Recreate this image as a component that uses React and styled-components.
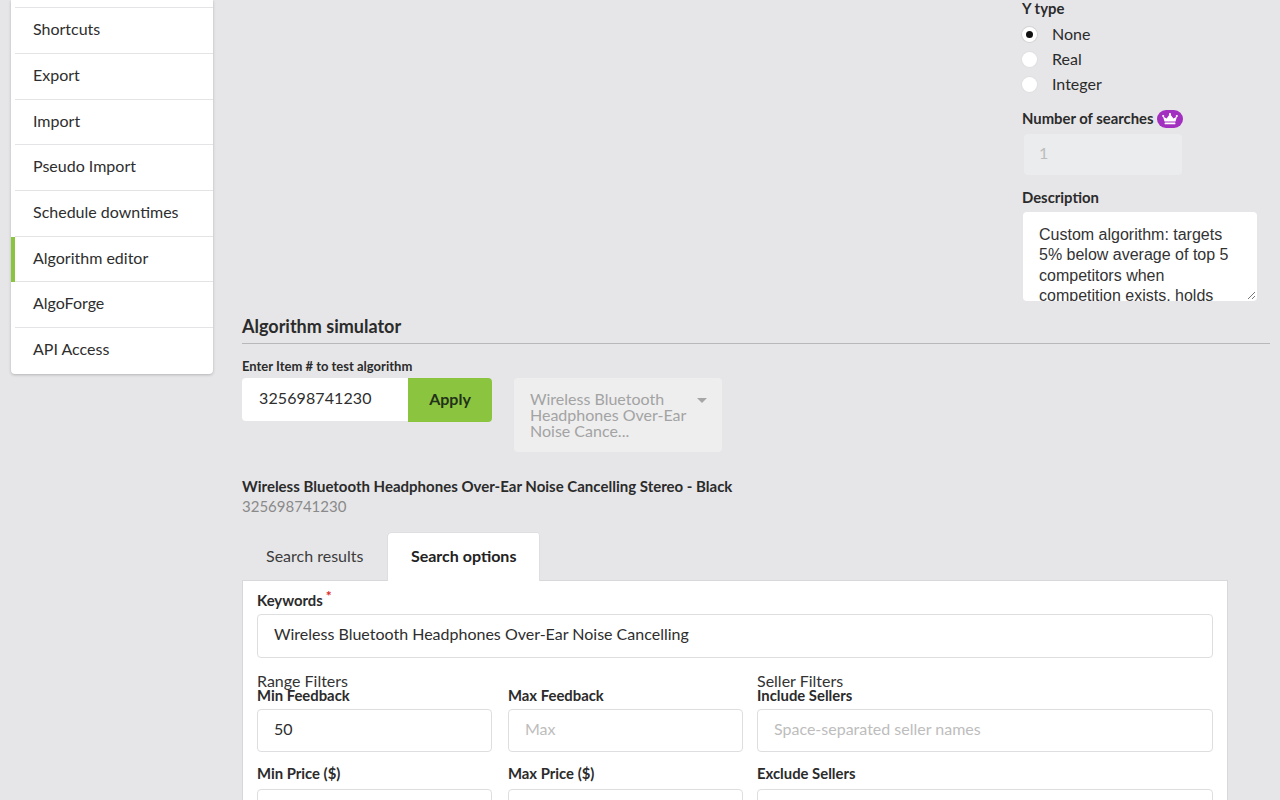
import React from "react";
import styled, { createGlobalStyle } from "styled-components";

const Global = createGlobalStyle`
  html, body { margin: 0; padding: 0; height: 800px; overflow: hidden; background: #e6e6e8; }
  body { font-family: Lato, "Liberation Sans", sans-serif; font-size: 16px; color: #2b2b2b; }
  #root { height: 800px; overflow: hidden; }
  * { box-sizing: border-box; }
`;

const Page = styled.div`
  display: flex;
  align-items: flex-start;
  height: 800px;
  overflow: hidden;
  padding-left: 11px;
`;

const Menu = styled.nav`
  width: 202px;
  flex: none;
  background: #fff;
  border-radius: 0 0 4px 4px;
  box-shadow: 0 1px 3px rgba(0, 0, 0, 0.22);
`;

const MenuStub = styled.div`
  height: 8.3px;
  border-bottom: 1px solid #e4e4e6;
  margin-left: 4px;
`;

const MenuItem = styled.div`
  position: relative;
  height: 45.7px;
  line-height: 42.2px;
  padding-left: 22px;
  font-size: 16px;
  color: #2e2e2e;
  &::after {
    content: "";
    position: absolute;
    left: 4px;
    right: 0;
    bottom: 0;
    height: 1px;
    background: ${(p) => (p.$last ? "transparent" : "#e4e4e6")};
  }
  ${(p) => p.$active && `box-shadow: inset 4px 0 0 #8bc540;`}
`;

const Main = styled.main`
  width: 1028px;
  margin-left: 29px;
  flex: none;
`;

const TopArea = styled.section`
  display: flex;
  justify-content: flex-end;
  height: 316px;
`;

const SideForm = styled.div`
  width: 248px;
`;

const FieldLabel = styled.div`
  font-size: 14.85px;
  font-weight: 700;
  line-height: 16px;
  padding-bottom: 2px;
  color: #2b2b2b;
`;

const RadioList = styled.div`
  margin-top: 4px;
  display: flex;
  flex-direction: column;
`;

const RadioRow = styled.div`
  display: flex;
  align-items: center;
  height: 25px;
  font-size: 16px;
`;

const RadioText = styled.span`
  line-height: 20px;
  margin-top: -2px;
`;

const RadioDot = styled.span`
  width: 15px;
  height: 15px;
  border-radius: 50%;
  background: #fff;
  margin-right: 15px;
  display: flex;
  align-items: center;
  justify-content: center;
  box-shadow: 0 0 0 1px ${(p) => (p.$on ? "#d4d4d6" : "#e0e0e2")};
  &::after {
    content: "";
    width: 7px;
    height: 7px;
    border-radius: 50%;
    background: ${(p) => (p.$on ? "#111" : "transparent")};
  }
`;

const LabelWithBadge = styled(FieldLabel)`
  display: flex;
  align-items: center;
  gap: 3px;
  height: 18px;
  padding-bottom: 0;
  line-height: 16px;
  margin-top: 13px;
`;

const LabelText = styled.span`
  margin-top: -2px;
`;

const CrownBadge = styled.span`
  width: 26px;
  height: 18px;
  border-radius: 9px;
  background: #a22fbf;
  display: flex;
  align-items: center;
  justify-content: center;
`;

const DisabledInput = styled.div`
  width: 158px;
  height: 41px;
  margin: 6px 0 0 2px;
  background: #eaecee;
  border-radius: 4px;
  padding-left: 15px;
  line-height: 38px;
  font-size: 16px;
  color: #bcbcbc;
`;

const DescLabel = styled(FieldLabel)`
  margin-top: 14px;
`;

const TextArea = styled.div`
  position: relative;
  width: 234px;
  height: 89px;
  margin: 5px 0 0 0.5px;
  background: #fff;
  border-radius: 4px;
  padding: 12.7px 16.5px 0;
  overflow: hidden;
  font-family: "Liberation Sans", Arial, sans-serif;
  font-size: 16px;
  line-height: 20.57px;
  color: #333;
`;

const Grip = styled.svg`
  position: absolute;
  right: 1px;
  bottom: 1px;
`;

const SectionTitle = styled.h2`
  margin: 0;
  height: 28px;
  line-height: 20px;
  font-size: 18px;
  font-weight: 700;
  color: #2b2b2b;
  border-bottom: 1px solid #b8b8ba;
  width: 1028px;
`;

const SmallLabel = styled.div`
  margin-top: 14px;
  font-size: 13px;
  font-weight: 700;
  line-height: 16px;
  color: #2b2b2b;
`;

const ItemRow = styled.div`
  display: flex;
  align-items: flex-start;
  margin-top: 4px;
`;

const ItemInput = styled.div`
  width: 166px;
  height: 43px;
  background: #fff;
  border-radius: 4px 0 0 4px;
  padding-left: 17px;
  line-height: 39px;
  font-size: 16px;
  letter-spacing: 0.1px;
  color: #2e2e2e;
`;

const ApplyButton = styled.button`
  width: 84px;
  height: 44px;
  border: 0;
  padding: 0 0 3px;
  background: #8bc540;
  border-radius: 0 4px 4px 0;
  font-family: inherit;
  font-size: 16px;
  font-weight: 700;
  color: #23321a;
`;

const SelectBox = styled.div`
  position: relative;
  width: 208px;
  height: 74px;
  margin-left: 22px;
  background: #eeeeef;
  border-radius: 4px;
  padding: 13px 30px 0 16px;
  font-size: 16px;
  line-height: 16px;
  color: #a3a3a3;
`;

const Caret = styled.span`
  position: absolute;
  top: 20px;
  right: 15px;
  border-left: 5px solid transparent;
  border-right: 5px solid transparent;
  border-top: 5px solid #a6a6a6;
`;

const ItemTitle = styled.div`
  margin-top: 25px;
  font-size: 15px;
  font-weight: 700;
  line-height: 18px;
  color: #2b2b2b;
`;

const ItemNumber = styled.div`
  margin-top: 1px;
  font-size: 15px;
  line-height: 20px;
  color: #8a8a8a;
`;

const Tabs = styled.div`
  display: flex;
  margin-top: 16px;
  height: 49px;
  position: relative;
  z-index: 1;
`;

const Tab = styled.div`
  padding: 0 24px;
  height: 49px;
  line-height: 47px;
  font-size: 16px;
  font-weight: ${(p) => (p.$active ? 700 : 400)};
  color: ${(p) => (p.$active ? "#222" : "#3c3c3c")};
  background: ${(p) => (p.$active ? "#fff" : "transparent")};
  border-radius: 4px 4px 0 0;
  ${(p) =>
    p.$active &&
    `margin-left: -0.5px; box-shadow: inset 1px 1px 0 #dedee0, inset -1px 0 0 #dedee0;`}
`;

const Panel = styled.section`
  width: 986px;
  height: 240px;
  background: #fff;
  border: 1px solid #d8d8da;
  border-bottom: 0;
  margin-top: -1px;
  padding: 10px 14px 0;
`;

const KeywordLabel = styled.div`
  font-size: 14.85px;
  font-weight: 700;
  line-height: 18px;
  color: #2b2b2b;
`;

const Required = styled.span`
  position: relative;
  top: -5px;
  color: #db2828;
  font-size: 14px;
  line-height: 0;
  margin-left: 3px;
  font-weight: 700;
`;

const Input = styled.div`
  height: ${(p) => p.$h || 43}px;
  margin-top: ${(p) => p.$mt ?? 5}px;
  background: #fff;
  border: 1px solid #dedee0;
  border-radius: 4px;
  padding-left: 16px;
  line-height: ${(p) => (p.$h || 43) - 6}px;
  font-size: 16px;
  color: ${(p) => (p.$ph ? "#bdbdbd" : "#2e2e2e")};
`;

const Filters = styled.div`
  display: grid;
  grid-template-columns: 486px 456px;
  column-gap: 14px;
  margin-top: 14px;
`;

const FilterHead = styled.div`
  font-size: 16px;
  line-height: 17px;
  color: #333;
`;

const FilterGrid = styled.div`
  display: grid;
  grid-template-columns: 235px 235px;
  column-gap: 16px;
  row-gap: 15px;
`;

const FilterStack = styled.div`
  display: flex;
  flex-direction: column;
  gap: 15px;
`;

const FilterLabel = styled(FieldLabel)`
  line-height: 13px;
  padding-bottom: 0;
`;

const Field = ({ label, value, ph, gap = 7 }) => (
  <div>
    <FilterLabel>{label}</FilterLabel>
    <Input $ph={ph} $mt={gap}>{value}</Input>
  </div>
);

const items = ["Shortcuts", "Export", "Import", "Pseudo Import", "Schedule downtimes", "Algorithm editor", "AlgoForge", "API Access"];

export default function App() {
  return (
    <>
      <Global />
      <Page>
        <Menu>
          <MenuStub />
          {items.map((t, i) => (
            <MenuItem key={t} $active={t === "Algorithm editor"} $last={i === items.length - 1}>
              {t}
            </MenuItem>
          ))}
        </Menu>
        <Main>
          <TopArea>
            <SideForm>
              <FieldLabel>Y type</FieldLabel>
              <RadioList>
                <RadioRow><RadioDot $on /><RadioText>None</RadioText></RadioRow>
                <RadioRow><RadioDot /><RadioText>Real</RadioText></RadioRow>
                <RadioRow><RadioDot /><RadioText>Integer</RadioText></RadioRow>
              </RadioList>
              <LabelWithBadge>
                <LabelText>Number of searches</LabelText>
                <CrownBadge>
                  <svg width="16" height="12" viewBox="0 0 16 12">
                    <path fill="#fff" d="M2.5 8.6 1 3.6l3.6 2L8 1l3.4 4.6 3.6-2-1.5 5z" />
                    <circle cx="1.2" cy="3" r="1.1" fill="#fff" />
                    <circle cx="8" cy="1.2" r="1.1" fill="#fff" />
                    <circle cx="14.8" cy="3" r="1.1" fill="#fff" />
                    <rect x="2.6" y="9.6" width="10.8" height="1.7" rx="0.5" fill="#fff" />
                  </svg>
                </CrownBadge>
              </LabelWithBadge>
              <DisabledInput>1</DisabledInput>
              <DescLabel>Description</DescLabel>
              <TextArea>
                Custom algorithm: targets 5% below average of top 5 competitors when competition exists, holds
                <Grip width="9" height="9" viewBox="0 0 9 9">
                  <path d="M1 8 8 1M5 8l3-3" stroke="#555" strokeWidth="0.8" fill="none" />
                </Grip>
              </TextArea>
            </SideForm>
          </TopArea>
          <SectionTitle>Algorithm simulator</SectionTitle>
          <SmallLabel>Enter Item # to test algorithm</SmallLabel>
          <ItemRow>
            <ItemInput>325698741230</ItemInput>
            <ApplyButton>Apply</ApplyButton>
            <SelectBox>
              Wireless Bluetooth Headphones Over-Ear Noise Cance...
              <Caret />
            </SelectBox>
          </ItemRow>
          <ItemTitle>Wireless Bluetooth Headphones Over-Ear Noise Cancelling Stereo - Black</ItemTitle>
          <ItemNumber>325698741230</ItemNumber>
          <Tabs>
            <Tab>Search results</Tab>
            <Tab $active>Search options</Tab>
          </Tabs>
          <Panel>
            <KeywordLabel>Keywords<Required>*</Required></KeywordLabel>
            <Input $h={44}>Wireless Bluetooth Headphones Over-Ear Noise Cancelling</Input>
            <Filters>
              <div>
                <FilterHead>Range Filters</FilterHead>
                <FilterGrid>
                  <Field label="Min Feedback" value="50" />
                  <Field label="Max Feedback" value="Max" ph />
                  <Field label="Min Price ($)" value="" gap={9} />
                  <Field label="Max Price ($)" value="" gap={9} />
                </FilterGrid>
              </div>
              <div>
                <FilterHead>Seller Filters</FilterHead>
                <FilterStack>
                  <Field label="Include Sellers" value="Space-separated seller names" ph />
                  <Field label="Exclude Sellers" value="" gap={9} />
                </FilterStack>
              </div>
            </Filters>
          </Panel>
        </Main>
      </Page>
    </>
  );
}
